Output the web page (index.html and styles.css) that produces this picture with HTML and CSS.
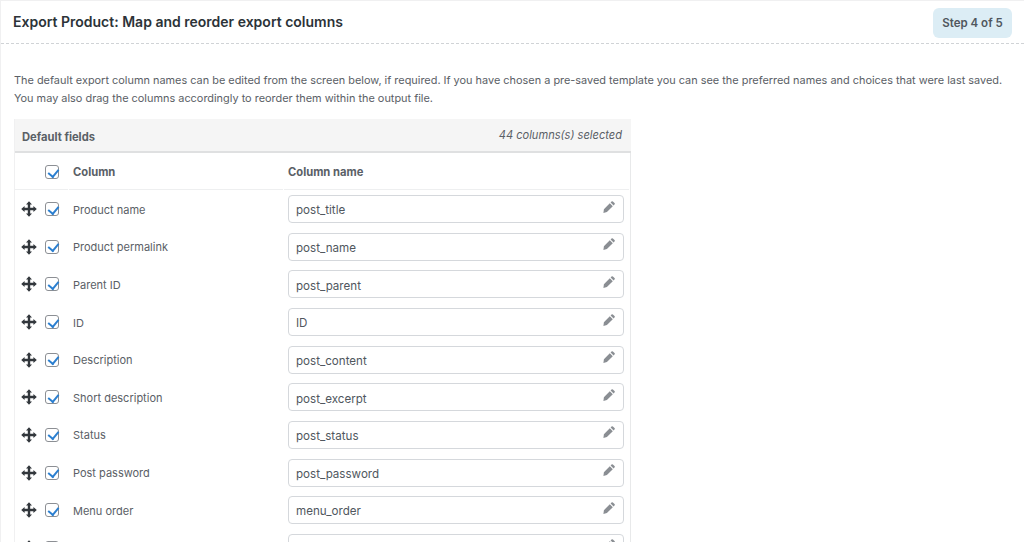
FILE: index.html
```html
<!DOCTYPE html>
<html lang="en">
<head>
    <meta charset="UTF-8">
    <title>Export Product</title>
    <link rel="stylesheet" href="styles.css">
</head>
<body>
    <svg class="icon-defs" width="0" height="0">
        <symbol id="move" viewBox="0 0 16 16">
            <path d="M8 .2 11 3.6H9.2V6.8h3.2V5L15.8 8l-3.4 3V9.2H9.2v3.2H11l-3 3.4-3-3.4h1.8V9.2H3.6V11L.2 8l3.4-3v1.8h3.2V3.6H5z"/>
        </symbol>
        <symbol id="pencil" viewBox="0 0 12 12">
            <path d="M8.5.5a1 1 0 0 1 1.4 0l1.6 1.6a1 1 0 0 1 0 1.4l-.9.9-3-3zM6.8 2.2l3 3-5.9 5.9-3.5.9.5-3.8z"/>
        </symbol>
    </svg>

    <div class="wizard">
        <header class="wizard-head">
            <h1>Export Product: Map and reorder export columns</h1>
            <div class="step-badge">Step 4 of 5</div>
        </header>

        <div class="wizard-body">
            <p class="intro">The default export column names can be edited from the screen below, if required. If you have chosen a pre-saved template you can see the preferred names and choices that were last saved. You may also drag the columns accordingly to reorder them within the output file.</p>

            <div class="fields-panel">
                <div class="panel-head">
                    <span class="panel-title">Default fields</span>
                    <span class="panel-count">44 columns(s) selected</span>
                </div>

                <div class="col-head">
                    <span class="cell-move"></span>
                    <span class="cell-check"><input type="checkbox" checked></span>
                    <span class="cell-label">Column</span>
                    <span class="cell-name">Column name</span>
                </div>

                <div id="rows"></div>
            </div>
        </div>
    </div>

    <script>
        // last row is cut off by the window, its text is not visible
        const fields = [
            ['Product name', 'post_title'],
            ['Product permalink', 'post_name'],
            ['Parent ID', 'post_parent'],
            ['ID', 'ID'],
            ['Description', 'post_content'],
            ['Short description', 'post_excerpt'],
            ['Status', 'post_status'],
            ['Post password', 'post_password'],
            ['Menu order', 'menu_order'],
            ['', '']
        ];

        document.getElementById('rows').innerHTML = fields.map(field => `
            <div class="field-row">
                <span class="cell-move"><svg class="move-icon"><use href="#move"/></svg></span>
                <span class="cell-check"><input type="checkbox" checked></span>
                <span class="cell-label">${field[0]}</span>
                <span class="cell-name">
                    <span class="name-box"><span class="name-text">${field[1]}</span><svg class="pencil-icon"><use href="#pencil"/></svg></span>
                </span>
            </div>
        `).join('');
    </script>
</body>
</html>
```

FILE: styles.css
```css
* {
    margin: 0;
    padding: 0;
    box-sizing: border-box;
}

html, body {
    height: 542px;
    overflow: hidden;
}

body {
    font-family: Inter, "Liberation Sans", sans-serif;
    color: #5a6066;
    background: #f0f0f1;
    padding: 1px 0 0 1px;
}

.icon-defs {
    position: absolute;
}

.wizard {
    background: #ffffff;
    height: 100%;
}

.wizard-head {
    display: flex;
    justify-content: space-between;
    align-items: center;
    height: 43px;
    padding: 0 12px 0 12px;
    border-bottom: 1px dashed #d0d3d6;
}

.wizard-head h1 {
    font-size: 14px;
    font-weight: 600;
    color: #2c3338;
    margin-top: -2px;
}

.step-badge {
    margin-top: 2px;
    padding: 8px 0;
    font-size: 11.5px;
    font-weight: 600;
    line-height: 14px;
    width: 79px;
    text-align: center;
    color: #50575e;
    background: #dcedf5;
    border-radius: 6px;
}

.wizard-body {
    padding: 28px 13px 0 13px;
}

.intro {
    font-size: 10.92px;
    line-height: 17.5px;
    margin-bottom: 12px;
}

.fields-panel {
    width: 617px;
    border-right: 1px solid #e8e9ea;
    border-left: 1px solid #f0f0f1;
}

.panel-head {
    display: flex;
    justify-content: space-between;
    align-items: center;
    height: 34px;
    padding: 0 9px 0 7px;
    background: #f5f5f5;
    border-bottom: 2px solid #dfe0e1;
    margin-right: -1px;
}

.panel-title {
    font-size: 11.2px;
    font-weight: 700;
    margin-top: 3px;
}

.panel-count {
    font-size: 11.1px;
    font-style: italic;
    margin-top: -1px;
}

.col-head,
.field-row {
    display: flex;
}

.col-head {
    height: 37.4px;
    font-size: 11.2px;
    font-weight: 700;
}

.col-head span {
    display: flex;
    align-items: center;
    padding-top: 2px;
    border-bottom: 1px solid #eeeff0;
}

.field-row {
    height: 37.63px;
    align-items: center;
    font-size: 11px;
}

.field-row .cell-label {
    margin-top: 1px;
}

.cell-move {
    display: flex;
    width: 30px;
    padding-left: 6px;
}

.cell-check {
    display: flex;
    width: 23px;
}

.cell-check input {
    appearance: none;
    position: relative;
    width: 14px;
    height: 14px;
    background: #ffffff;
    border: 1px solid #8c8f94;
    border-radius: 3px;
}

.cell-check input:checked::after {
    content: '';
    position: absolute;
    left: 4px;
    top: 0.5px;
    width: 4.5px;
    height: 8px;
    border: solid #2b7fd0;
    border-width: 0 2px 2px 0;
    transform: rotate(40deg);
}

.cell-label {
    width: 214px;
    margin-left: 1px;
    padding-left: 4px;
}

.cell-name {
    flex: 1;
    margin-left: 1px;
    padding-left: 4px;
    margin-right: 1px;
    padding-right: 5px;
}

.move-icon {
    width: 16px;
    height: 16px;
    fill: #32373c;
}

.name-box {
    display: flex;
    justify-content: space-between;
    align-items: center;
    height: 28px;
    padding: 0 8px 0 7px;
    font-size: 11.6px;
    color: #50575e;
    background: #ffffff;
    border: 1px solid #d5d8dc;
    border-radius: 4px;
}

.name-text {
    margin-top: 2.5px;
}

.pencil-icon {
    width: 12px;
    height: 12px;
    margin-top: -5px;
    fill: #8a8e93;
}
```
